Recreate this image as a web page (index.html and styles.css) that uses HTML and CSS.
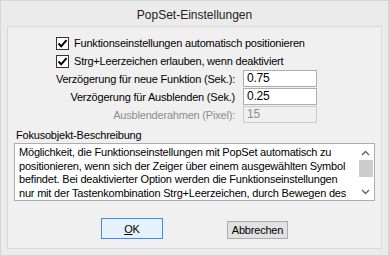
FILE: index.html
```html
<!DOCTYPE html>
<html lang="de">
<head>
    <meta charset="UTF-8">
    <meta name="viewport" content="width=device-width, initial-scale=1.0">
    <title>PopSet-Einstellungen</title>
    <link rel="stylesheet" href="styles.css">
</head>
<body>
    <div class="window">
        <div class="titlebar">PopSet-Einstellungen</div>
        <div class="client">
            <div class="checks">
                <label class="check-row">
                    <span class="checkbox">
                        <svg width="11" height="11" viewBox="0 0 11 11"><path d="M1.5 5.5 L4.2 8.3 L9.5 2.2" fill="none" stroke="#000" stroke-width="2"/></svg>
                    </span>
                    Funktionseinstellungen automatisch positionieren
                </label>
                <label class="check-row">
                    <span class="checkbox">
                        <svg width="11" height="11" viewBox="0 0 11 11"><path d="M1.5 5.5 L4.2 8.3 L9.5 2.2" fill="none" stroke="#000" stroke-width="2"/></svg>
                    </span>
                    Strg+Leerzeichen erlauben, wenn deaktiviert
                </label>
            </div>

            <div class="settings">
                <span class="field-label">Verzögerung für neue Funktion (Sek.):</span>
                <span class="field">0.75</span>
                <span class="field-label">Verzögerung für Ausblenden (Sek.)</span>
                <span class="field">0.25</span>
                <span class="field-label disabled">Ausblenderahmen (Pixel):</span>
                <span class="field disabled">15</span>
            </div>

            <div class="desc-label">Fokusobjekt-Beschreibung</div>
            <div class="desc-box">
                <div class="desc-text">
                    Möglichkeit, die Funktionseinstellungen mit PopSet automatisch zu<br>
                    positionieren, wenn sich der Zeiger über einem ausgewählten Symbol<br>
                    befindet. Bei deaktivierter Option werden die Funktionseinstellungen<br>
                    nur mit der Tastenkombination Strg+Leerzeichen, durch Bewegen des
                </div>
                <div class="scrollbar">
                    <svg class="arrow" width="9" height="6" viewBox="0 0 9 6"><path d="M1 5 L4.5 1.5 L8 5" fill="none" stroke="#606060" stroke-width="1.3"/></svg>
                    <div class="track"><div class="thumb"></div></div>
                    <svg class="arrow" width="9" height="6" viewBox="0 0 9 6"><path d="M1 1 L4.5 4.5 L8 1" fill="none" stroke="#606060" stroke-width="1.3"/></svg>
                </div>
            </div>

            <div class="buttons">
                <button class="btn default"><u>O</u>K</button>
                <button class="btn">Abbrechen</button>
            </div>
        </div>
    </div>
</body>
</html>
```

FILE: styles.css
```css
body {
    margin: 0;
    font-family: "Liberation Sans", Arial, sans-serif;
    font-size: 12px;
    color: #000;
    background-color: #ebebeb;
}

.window {
    width: 389px;
    height: 256px;
    box-sizing: border-box;
    border: 1px solid #d6d6d6;
    background-color: #ebebeb;
}

.titlebar {
    height: 25px;
    line-height: 28px;
    text-align: center;
    font-size: 12px;
    color: #222;
}

.client {
    margin: 0 6px;
    height: 223px;
    box-sizing: border-box;
    border: 1px solid #d9d9d9;
    background-color: #f0f0f0;
    font-size: 11px;
    letter-spacing: -0.2px;
}

.checks {
    padding: 7px 0 0 48px;
}

.check-row {
    display: flex;
    align-items: center;
    height: 18px;
    gap: 5px;
}

.checkbox {
    width: 11px;
    height: 11px;
    border: 1px solid #333;
    background-color: #fff;
    display: flex;
}

.settings {
    display: grid;
    grid-template-columns: 227px 74px;
    column-gap: 8px;
    row-gap: 1px;
    align-items: center;
}

.field-label {
    text-align: right;
}

.field {
    height: 17px;
    box-sizing: border-box;
    border: 1px solid #abadb3;
    background-color: #fff;
    padding-left: 3px;
    line-height: 15px;
    font-size: 12px;
}

.disabled {
    color: #8d8d8d;
}

.field.disabled {
    background-color: #f0f0f0;
    border-color: #cccccc;
}

.desc-label {
    margin: 5px 0 0 8px;
    line-height: 14px;
}

.desc-box {
    margin: 1px 0 0 6px;
    width: 361px;
    height: 58px;
    box-sizing: border-box;
    border: 1px solid #abadb3;
    background-color: #fff;
    display: flex;
}

.desc-text {
    flex: 1;
    padding: 2px 0 0 4px;
    line-height: 13.5px;
    white-space: nowrap;
    overflow: hidden;
}

.scrollbar {
    width: 17px;
    display: flex;
    flex-direction: column;
    align-items: center;
    padding: 6px 0 5px;
    box-sizing: border-box;
}

.arrow {
    flex: none;
}

.track {
    flex: 1;
    width: 100%;
    padding: 4px 0 12px;
    box-sizing: border-box;
    display: flex;
    justify-content: center;
}

.thumb {
    width: 14px;
    background-color: #cdcdcd;
}

.buttons {
    display: flex;
    align-items: flex-end;
    margin: 17px 0 0 93px;
    gap: 64px;
}

.btn {
    font-family: inherit;
    font-size: 11px;
    letter-spacing: -0.2px;
    color: #000;
    background-color: #e1e1e1;
    border: 1px solid #adadad;
    padding: 0;
    height: 18px;
    width: 61px;
}

.btn.default {
    height: 21px;
    width: 62px;
    border-color: #3c8ee6;
    background-color: #e5f1fb;
}
```
